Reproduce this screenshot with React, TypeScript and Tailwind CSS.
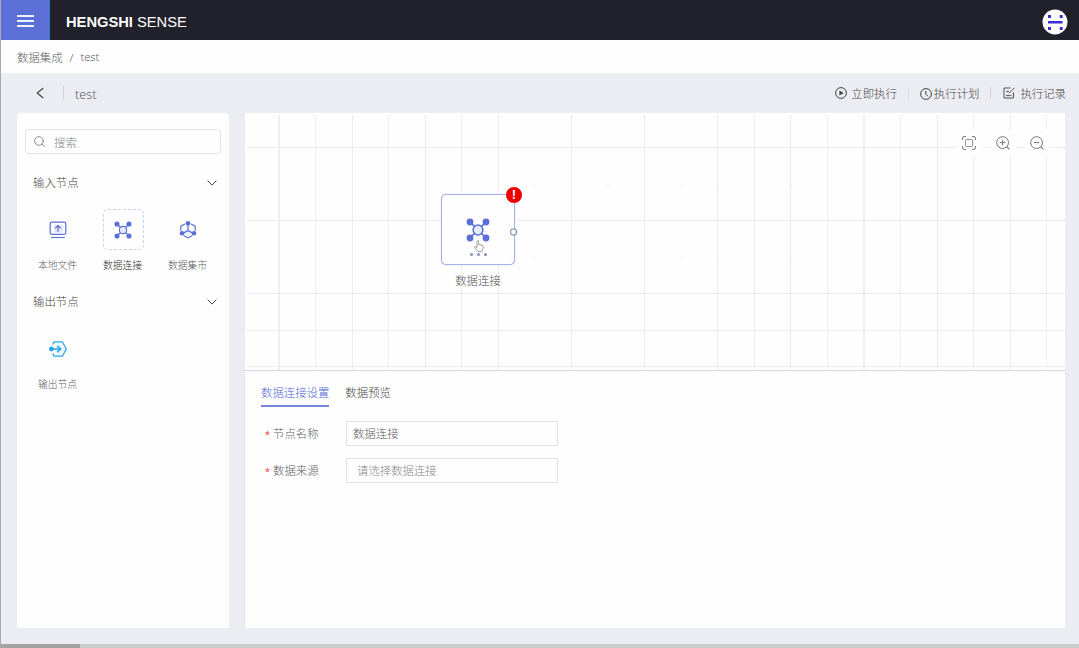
import React, { useState } from "react";
import { Search } from "lucide-react";

interface IconProps {
  className?: string;
}

interface NodeItem {
  name: string;
  icon: React.ComponentType<IconProps>;
  active?: boolean;
}

interface GridLine {
  pos: number;
  color: string;
  width?: number;
}

const GRAY = "#ecebf1";
const PINK = "#f8ebef";

// Grid positions are relative to the canvas corner
const verticalLines: GridLine[] = [
  { pos: 33, color: PINK, width: 2 },
  { pos: 70, color: PINK },
  { pos: 107, color: GRAY },
  { pos: 143, color: PINK },
  { pos: 180, color: GRAY },
  { pos: 216, color: PINK },
  { pos: 253, color: GRAY },
  { pos: 326, color: GRAY },
  { pos: 399, color: GRAY },
  { pos: 472, color: GRAY },
  { pos: 509, color: PINK },
  { pos: 545, color: GRAY },
  { pos: 582, color: PINK },
  { pos: 618, color: PINK, width: 2 },
  { pos: 655, color: PINK },
  { pos: 692, color: GRAY },
  { pos: 728, color: PINK },
  { pos: 765, color: GRAY },
  { pos: 801, color: PINK },
];

const horizontalLines: GridLine[] = [
  { pos: 34, color: GRAY },
  { pos: 107, color: GRAY },
  { pos: 180, color: "#e9ebf2" },
  { pos: 217, color: "#f2ecf0" },
  { pos: 253, color: GRAY },
];

function LocalFileIcon({ className }: IconProps) {
  return (
    <svg viewBox="0 0 18 18" fill="none" stroke="#5b6fd6" className={className}>
      <rect x="1.2" y="1.2" width="15.6" height="12.2" rx="1.8" fill="#fff" strokeWidth="1.2" />
      <rect x="5" y="3.4" width="9" height="8.4" fill="#e6e9f7" stroke="none" />
      <path d="M9 10.8V4.8M6.2 7.2 9 4.5l2.8 2.7" strokeWidth="1.2" />
      <path d="M2.2 16.5h13.6" strokeWidth="1.1" />
    </svg>
  );
}

function ConnectionIcon({ className }: IconProps) {
  return (
    <svg viewBox="0 0 24 24" fill="none" stroke="#5b6fd6" className={className}>
      <path d="M4 4l16 16M20 4 4 20" strokeWidth="1.7" />
      <circle cx="12" cy="12" r="4.9" fill="#e6e9f7" strokeWidth="1.5" />
      <g fill="#5b6fd6" stroke="none">
        <circle cx="4" cy="4" r="3.4" />
        <circle cx="20" cy="4" r="3.4" />
        <circle cx="4" cy="20" r="3.4" />
        <circle cx="20" cy="20" r="3.4" />
      </g>
    </svg>
  );
}

function MarketIcon({ className }: IconProps) {
  return (
    <svg viewBox="0 0 18 18" fill="none" stroke="#5b6fd6" className={className}>
      <path d="M5 8.6 9 6.5l4 2.1v3.6l-4 2.2-4-2.2z" fill="#eef0fa" stroke="none" />
      <path d="M6 3 1.8 5.2v4.6M12 3l4.2 2.2v4.6M4.6 14.4 9 16.9l4.4-2.5" strokeWidth="1.2" />
      <path d="M9 3v6.6M9 9.6 3 12.7M9 9.6l6 3.1" strokeWidth="1.2" />
      <g fill="#5b6fd6" stroke="none">
        <circle cx="9" cy="2.3" r="2.3" />
        <circle cx="3" cy="12.3" r="2.3" />
        <circle cx="15" cy="12.3" r="2.3" />
      </g>
    </svg>
  );
}

function OutputIcon({ className }: IconProps) {
  return (
    <svg viewBox="0 0 18 18" fill="none" stroke="#27a4ee" className={className}>
      <path d="M7 5.5h5l2.2 3.5-2.2 4H7z" fill="#e0f1fc" stroke="none" />
      <path d="M3.8 4.5 5 1.8h8.3l4 7.2-4 7.2H5l-1.2-2.7" strokeWidth="1.3" />
      <path d="M2.5 9h8.8M8.3 5.8 11.5 9l-3.2 3.2" strokeWidth="1.5" />
      <circle cx="2.4" cy="9" r="2.4" fill="#27a4ee" stroke="none" />
    </svg>
  );
}

function PlayIcon({ className }: IconProps) {
  return (
    <svg viewBox="0 0 12 12" fill="none" stroke="currentColor" className={className}>
      <circle cx="6" cy="6" r="5.4" />
      <path d="M4.4 3.4v5.2L8.7 6z" fill="currentColor" stroke="none" />
    </svg>
  );
}

function ClockIcon({ className }: IconProps) {
  return (
    <svg viewBox="0 0 12 12" fill="none" stroke="currentColor" className={className}>
      <circle cx="6" cy="6" r="5.4" />
      <path d="M5.8 2.8v3.4L8 8.4" />
    </svg>
  );
}

function RecordIcon({ className }: IconProps) {
  return (
    <svg viewBox="0 0 12 12" fill="none" stroke="currentColor" className={className}>
      <path d="M7.5 1H1v10h9.5V5.5M3 4.4h3M3 8.6h5.4M5.8 6.4 11.4.8" strokeWidth=".9" />
    </svg>
  );
}

function DownIcon({ className }: IconProps) {
  return (
    <svg viewBox="0 0 10 6" fill="none" stroke="currentColor" className={className}>
      <path d="M.6.6 5 5.1 9.4.6" />
    </svg>
  );
}

function FitIcon({ className }: IconProps) {
  return (
    <svg viewBox="0 0 14 14" fill="none" stroke="currentColor" className={className}>
      <path d="M.6 4V2Q.6.6 2 .6h2M10 .6h2q1.4 0 1.4 1.4v2M13.4 10v2q0 1.4-1.4 1.4h-2M4 13.4H2Q.6 13.4.6 12v-2" />
      <rect x="3.5" y="3.5" width="7" height="7" rx=".8" strokeWidth=".8" />
    </svg>
  );
}

function ZoomIcon({ plus }: { plus?: boolean }) {
  return (
    <svg viewBox="0 0 14 14" fill="none" stroke="currentColor" className="h-3.5 w-3.5">
      <circle cx="6.6" cy="6.6" r="5.9" />
      <path d={plus ? "M3.8 6.6h5.6M6.6 3.8v5.6" : "M3.8 6.6h5.6"} />
      <path d="m10.7 10.7 2.7 2.7" strokeWidth="1.2" />
    </svg>
  );
}

const inputNodes: NodeItem[] = [
  { name: "本地文件", icon: LocalFileIcon },
  { name: "数据连接", icon: ConnectionIcon, active: true },
  { name: "数据集市", icon: MarketIcon },
];

const outputNodes: NodeItem[] = [{ name: "输出节点", icon: OutputIcon }];

function NodeGroup({ title, nodes }: { title: string; nodes: NodeItem[] }) {
  const [open, setOpen] = useState(true);

  return (
    <section className="h-[119px]">
      <button
        className="flex h-5 w-full items-center justify-between pr-3 pl-4 text-[#444]"
        onClick={() => setOpen(!open)}
      >
        <span className="pt-px">{title}</span>
        <DownIcon className="mt-0.5 h-1.5 w-2.5" />
      </button>
      {open && (
        <div className="mt-[17px] flex pl-2">
          {nodes.map(({ name, icon: Icon, active }) => (
            <div key={name} className="flex w-[65px] flex-col items-center">
              <div
                className={`ml-px flex h-[41px] w-[41px] items-center justify-center rounded-[5px] border border-dashed ${
                  active ? "border-[#c8d0ec]" : "border-transparent"
                }`}
              >
                <Icon className="mr-px h-[18px] w-[18px]" />
              </div>
              <span
                className={`mt-2 text-[9.8px] leading-4 ${active ? "text-[#333]" : "text-[#606060]"}`}
              >
                {name}
              </span>
            </div>
          ))}
        </div>
      )}
    </section>
  );
}

function Header() {
  return (
    <header className="flex h-10 items-center bg-[#20212a]">
      <button className="flex h-10 w-[49px] flex-col items-center justify-center gap-[3px] border-r border-[#3377cf] bg-[#5b6fd6] pt-px">
        <span className="h-0.5 w-[17px] bg-[#eef0fb]" />
        <span className="h-0.5 w-[17px] bg-[#eef0fb]" />
        <span className="h-0.5 w-[17px] bg-[#eef0fb]" />
      </button>
      <h1 className="mt-1 ml-4 font-['Liberation_Sans',sans-serif] text-[14.7px] leading-5 font-normal text-white">
        <b>HENGSHI</b> SENSE
      </h1>
      <svg viewBox="0 0 26 26" className="mt-[3px] mr-[11px] ml-auto h-[26px] w-[26px]">
        <circle cx="13" cy="13" r="12.5" fill="#fff" />
        <path
          d="M6 6h3v3H6zM17.7 6h3v3h-3zM6 18h3v3H6zM17.7 18h3v3h-3zM6 12h14.5v2.4H6z"
          fill="#3a2fd5"
        />
      </svg>
    </header>
  );
}

function Toolbar() {
  return (
    <div className="flex h-10 items-center pr-[13px] pl-[35px] text-[#444]">
      <svg viewBox="0 0 8 12" fill="none" stroke="currentColor" className="h-3 w-2">
        <path d="M7.3 1 1.2 6l6.1 5" strokeWidth="1.2" />
      </svg>
      <span className="mr-[11px] ml-[19px] h-3.5 w-px bg-[#d2d3d8]" />
      <span className="mt-1 text-[12.6px] text-[#606166]">test</span>
      <div className="ml-auto flex items-center pt-px">
        <button className="flex items-center gap-1">
          <PlayIcon className="h-3 w-3" />
          立即执行
        </button>
        <span className="mx-[11px] h-3 w-px bg-[#dcdde2]" />
        <button className="flex items-center gap-[2px]">
          <ClockIcon className="mt-px h-3 w-3" />
          执行计划
        </button>
        <span className="mr-3 ml-[11px] h-3 w-px bg-[#d2d3d8]" />
        <button className="flex items-center gap-[5px]">
          <RecordIcon className="h-3 w-3" />
          执行记录
        </button>
      </div>
    </div>
  );
}

function Sidebar() {
  return (
    <aside className="h-full w-[212px] rounded-t-sm bg-[#fefefe] pt-4">
      <div className="mx-2 flex h-[25px] items-center gap-2 rounded border border-[#e3e3e5] px-2 text-[#888]">
        <Search className="-ml-px h-[13px] w-[13px]" strokeWidth={1.8} />
        <span className="pt-0.5">搜索</span>
      </div>
      <div className="mt-[18px]">
        <NodeGroup title="输入节点" nodes={inputNodes} />
        <NodeGroup title="输出节点" nodes={outputNodes} />
      </div>
    </aside>
  );
}

function Canvas() {
  return (
    <div className="relative h-[257px] overflow-hidden bg-[#fefefe]">
      <svg width="820" height="257" className="absolute inset-0" shapeRendering="crispEdges">
        {verticalLines.map(({ pos, color, width = 1 }) => (
          <rect key={pos} x={pos} y={2} width={width} height={255} fill={color} />
        ))}
        {horizontalLines.map(({ pos, color }) => (
          <rect key={pos} x={1} y={pos} width={819} height={1} fill={color} />
        ))}
        {[71.5, 144.5].map((y) => (
          <path
            key={y}
            d={`M33 ${y}h2M107 ${y}h1M180 ${y}h1M289 ${y}h1M362 ${y}h2M436 ${y}h1M472 ${y}h2M545 ${y}h2M692 ${y}h1M765 ${y}h1`}
            stroke="#e9eaef"
            strokeWidth="1"
          />
        ))}
      </svg>

      <div className="absolute top-[17px] right-[15px] flex gap-2 text-[#777]">
        <button className="flex h-[26px] w-[26px] items-center justify-center bg-[#fefefe]">
          <FitIcon className="h-3.5 w-3.5" />
        </button>
        <button className="flex h-[26px] w-[26px] items-center justify-center bg-[#fefefe]">
          <ZoomIcon plus />
        </button>
        <button className="flex h-[26px] w-[26px] items-center justify-center bg-[#fefefe]">
          <ZoomIcon />
        </button>
      </div>

      <div className="absolute top-[81px] left-[196px] w-[74px]">
        <div className="relative h-[71px] rounded-[5px] border border-[#a5b1e9] bg-[#fefefe] shadow-[0_0_1px_#a5b1e9]">
          <ConnectionIcon className="absolute top-[22.5px] left-6 h-6 w-6" />
          <span className="absolute -top-2 -right-2 flex h-4 w-4 items-center justify-center rounded-full bg-[#ec0000] font-['Liberation_Sans',sans-serif] text-[13px] leading-4 font-bold text-white">
            !
          </span>
          <svg viewBox="0 0 8 8" className="absolute top-[33px] -right-1 h-2 w-2">
            <circle cx="3.5" cy="4" r="3.1" fill="#fff" stroke="#8d9bbf" strokeWidth="1.4" />
          </svg>
          <div className="absolute top-[58px] left-7 flex gap-[4.5px]">
            <span className="h-[2.5px] w-[2.5px] rounded-full bg-[#8490b8]" />
            <span className="h-[2.5px] w-[2.5px] rounded-full bg-[#8490b8]" />
            <span className="h-[2.5px] w-[2.5px] rounded-full bg-[#8490b8]" />
          </div>
          {/* hand pointer */}
          <svg viewBox="0 0 10 12" className="absolute top-[45px] left-8 h-3 w-2.5">
            <path
              d="M3 7.4V1.4q0-.9.8-.9t.8.9v3.1l3.4.8q1.4.3 1.3 1.6L8.8 9.5l-.7 1.9H4L.7 7.6q-.4-.9.6-.9z"
              fill="#fff"
              stroke="#777"
              strokeWidth=".7"
            />
          </svg>
        </div>
        <p className="mt-[7px] text-center leading-[18px] text-[#555]">数据连接</p>
      </div>
    </div>
  );
}

function RequiredLabel({ text }: { text: string }) {
  return (
    <span className="flex w-[85px] items-center gap-1 pl-1 text-[#606060]">
      <span className="w-1 pt-0.5 text-[9px] font-normal text-[#ee3333]">*</span>
      {text}
    </span>
  );
}

function SettingsPanel() {
  const [tab, setTab] = useState("settings");
  const tabs = [
    { id: "settings", label: "数据连接设置" },
    { id: "preview", label: "数据预览" },
  ];

  return (
    <div className="h-[258px] border-t border-[#d6d5e2] bg-[#fefefe] px-4 pt-[13px] shadow-[-1px_0_0_#e6e6ec]">
      <nav className="flex gap-4">
        {tabs.map(({ id, label }) => (
          <button
            key={id}
            onClick={() => setTab(id)}
            className={`h-[23px] border-b-2 pb-[3px] leading-[18px] ${
              tab === id ? "border-[#7585dc] text-[#556cd8]" : "border-transparent text-[#444]"
            }`}
          >
            {label}
          </button>
        ))}
      </nav>
      <div className="mt-3.5 flex flex-col gap-3">
        <label className="flex h-[25px] items-center">
          <RequiredLabel text="节点名称" />
          <span className="flex h-full w-[212px] items-center rounded-[1px] border border-[#e3e2e6] px-1.5 text-[#606060]">
            数据连接
          </span>
        </label>
        <label className="flex h-[25px] items-center">
          <RequiredLabel text="数据来源" />
          <span className="flex h-full w-[212px] items-center rounded-[1px] border border-[#e3e2e6] px-2.5 text-[#888]">
            请选择数据连接
          </span>
        </label>
      </div>
    </div>
  );
}

export default function App() {
  return (
    <div className="h-[648px] w-[1079px] overflow-hidden bg-[#ecedf2] font-['Noto_Sans','Noto_Sans_CJK_SC',sans-serif] text-[11.4px] font-light">
      <div className="h-[644px] border-l border-[#aaa8ac]">
        <Header />
        <nav className="flex h-[33px] items-center gap-[7px] bg-[#fefefe] pt-0.5 pl-4 text-[#606060]">
          <span>数据集成</span>
          <span>/</span>
          <span className="text-[11px]">test</span>
        </nav>
        <Toolbar />
        <main className="flex h-[515px] gap-4 pl-4">
          <Sidebar />
          <div className="w-[820px]">
            <Canvas />
            <SettingsPanel />
          </div>
        </main>
      </div>
      <div className="h-1 bg-[#cbcbcd]">
        <div className="h-full w-20 bg-[#a4a2a5]" />
      </div>
    </div>
  );
}
